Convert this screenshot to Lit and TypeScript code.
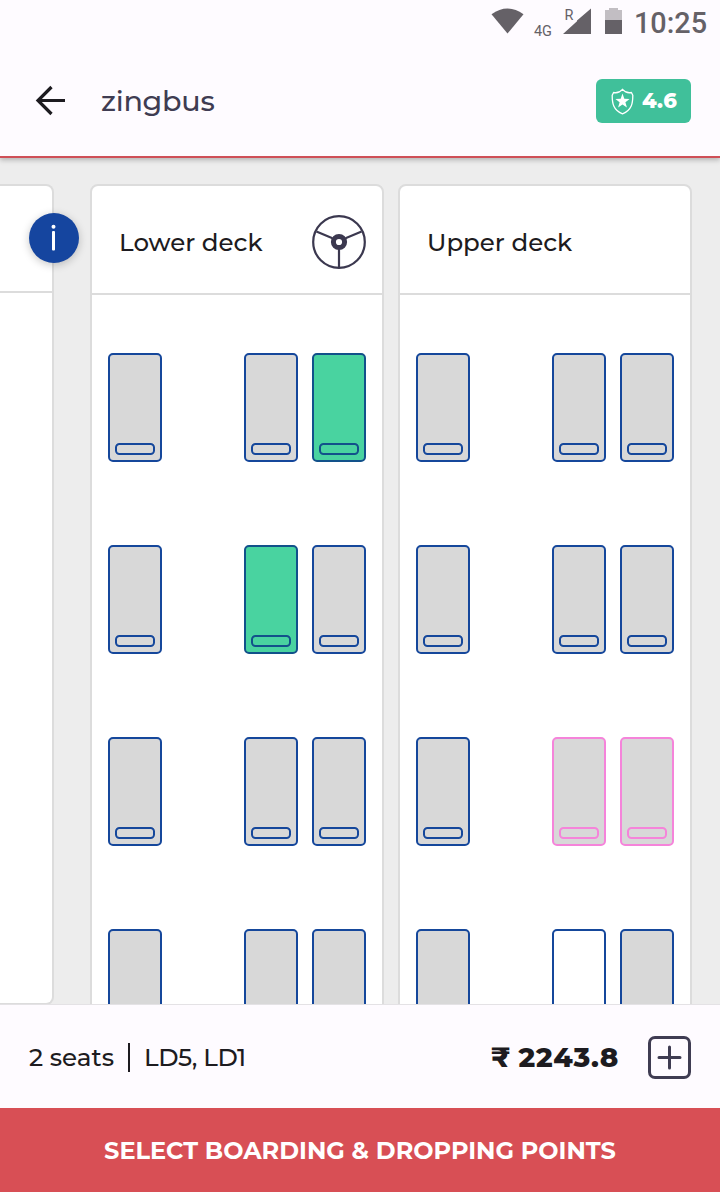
import { LitElement, html, css, svg } from "lit";
import { customElement, property } from "lit/decorators.js";

type SeatState = "booked" | "selected" | "ladies" | "open";

const LOWER: SeatState[][] = [
  ["booked", "booked", "selected"],
  ["booked", "selected", "booked"],
  ["booked", "booked", "booked"],
  ["booked", "booked", "booked"],
];
const UPPER: SeatState[][] = [
  ["booked", "booked", "booked"],
  ["booked", "booked", "booked"],
  ["booked", "ladies", "ladies"],
  ["booked", "open", "booked"],
];

const wheel = svg`
  <g fill="none" stroke="#3b384f" stroke-width="2.2">
    <circle cx="27" cy="27" r="25.8"></circle>
    <path d="M4.4 16.6 L20.5 23.2 M49.6 16.6 L33.5 23.2 M27 33 V52.5"></path>
    <circle cx="27" cy="27" r="5.6" stroke-width="5"></circle>
  </g>`;

@customElement("status-bar")
class StatusBar extends LitElement {
  static styles = css`
    :host {
      display: block; flex: none; height: 44px; position: relative; z-index: 3;
      background: #fefbff; font-family: Roboto, sans-serif;
    }
    .icons { display: block; width: 720px; height: 44px; }
    .net { font-size: 14.5px; }
    .roam { font-size: 14.5px; }
    .time { font-size: 29.5px; font-weight: 500; }
  `;
  render() {
    return html`<svg class="icons" viewBox="0 0 720 44" fill="#656167">
      <path d="M491.5 14.3 Q507.5 2.8 523.5 14.3 L507.5 33.5Z"></path>
      <text class="net" x="534" y="36" textLength="18">4G</text>
      <text class="roam" x="564.5" y="20">R</text>
      <path d="M563 34 L577 21.2 L577 20.5 L591 8.5 V34Z"></path>
      <path fill="#c2bec3" d="M605 20V10H609V8H618V10H622V20Z"></path>
      <path d="M605 20H622V34H605Z"></path>
      <text class="time" x="634" y="33" textLength="73" lengthAdjust="spacingAndGlyphs">10:25</text>
    </svg>`;
  }
}

@customElement("seat-deck")
class SeatDeck extends LitElement {
  @property() label = "";
  @property({ type: Boolean }) driver = false;
  @property({ attribute: false }) rows: SeatState[][] = [];
  static styles = css`
    :host {
      display: block; box-sizing: border-box; flex: none; width: 294px;
      background: #fff; border: 2px solid #dcdcdc; border-radius: 8px;
    }
    .head {
      display: flex; align-items: center; justify-content: space-between;
      height: 107px; padding: 0 16px 0 27px; border-bottom: 2px solid #dcdcdc;
    }
    .name { font-size: 24.5px; font-weight: 500; line-height: 32px; margin-top: 5px; }
    .wheel { width: 54px; height: 54px; margin-top: 5px; }
    .seats {
      display: grid; grid-template-columns: 122px 54px 54px;
      column-gap: 14px; row-gap: 83px; padding: 58px 16px 20px;
    }
    .seat {
      box-sizing: border-box; width: 54px; height: 109px; border: 2px solid #15479b;
      border-radius: 5px; background: #d8d8d8; display: flex; align-items: flex-end;
      justify-content: center; padding-bottom: 5px;
    }
    .pillow {
      box-sizing: border-box; width: 40px; height: 12px;
      border: 2px solid #15479b; border-radius: 4.5px;
    }
    .selected { background: #49d3a0; border-color: #12518a; }
    .selected .pillow { border-color: #12518a; }
    .open { background: #fff; }
    .ladies, .ladies .pillow { border-color: #f584da; }
  `;
  render() {
    return html`
      <div class="head">
        <span class="name">${this.label}</span>
        ${this.driver ? html`<svg class="wheel" viewBox="0 0 54 54">${wheel}</svg>` : ""}
      </div>
      <div class="seats">
        ${this.rows.flat().map((s) => html`<div class="seat ${s}"><div class="pillow"></div></div>`)}
      </div>`;
  }
}

@customElement("app-root")
class AppRoot extends LitElement {
  static styles = css`
    :host {
      display: flex; flex-direction: column; width: 720px; height: 1192px; overflow: hidden;
      font-family: Montserrat, Inter, sans-serif; color: #1d1b20; background: #fefbff;
    }
    .header {
      display: flex; align-items: center; height: 112px; flex: none; box-sizing: content-box;
      border-bottom: 2px solid #cf4f57; padding: 0 29px 0 34px; position: relative; z-index: 2;
      box-shadow: 0 2px 5px rgba(0, 0, 0, 0.25); background: #fefbff;
    }
    .back { width: 34px; height: 32px; }
    .title {
      flex: 1; margin: 2px 0 0 33px; font-size: 28.6px; font-weight: 500; letter-spacing: -0.25px;
      color: #3f3c52; line-height: 36px;
    }
    .rating {
      display: flex; align-items: center; gap: 8px; box-sizing: border-box; width: 95px; height: 44px;
      margin-top: 2px; padding-left: 15px; border-radius: 6px; background: #40c09a; color: #fff;
      font-size: 21px; font-weight: 800; line-height: 28px; font-kerning: none;
    }
    .score { letter-spacing: 0.3px; }
    .shield { width: 23px; height: 27px; flex: none; }
    .main {
      flex: none; height: 846px; box-sizing: border-box; overflow: hidden; position: relative;
      display: flex; align-items: flex-start; background: #ededed; padding-top: 26px;
    }
    .prev {
      flex: none; box-sizing: border-box; width: 54px; height: 821px; margin-right: 36px; background: #fff;
      border: 2px solid #dcdcdc; border-left: 0; border-radius: 0 8px 8px 0;
    }
    .prev-head { height: 105px; border-bottom: 2px solid #dcdcdc; }
    .upper { margin-left: 14px; }
    .info {
      position: absolute; left: 29px; top: 55px; width: 50px; height: 50px; border-radius: 50%;
      background: #15459f; box-shadow: 0 2px 8px rgba(0, 0, 0, 0.22);
    }
    .summary {
      display: flex; align-items: center; flex: none; height: 104px; box-sizing: border-box;
      padding: 2px 29px 0 28px; background: #fefbff; border-top: 1px solid #e4e2e5;
      font-size: 24.6px; font-weight: 500; line-height: 30px;
    }
    .count, .ids, .price { padding-bottom: 2px; }
    .count { box-sizing: border-box; width: 100px; padding-left: 1px; white-space: nowrap; }
    .bar { width: 2px; height: 29px; background: #1d1b20; }
    .ids { flex: 1; margin-left: 14px; letter-spacing: -0.4px; }
    .price {
      font-size: 27.8px; font-weight: 800; letter-spacing: 0.75px; word-spacing: -1.8px;
      margin-right: 29px; white-space: nowrap; font-kerning: none;
    }
    .plus { width: 43px; height: 43px; }
    .cta {
      flex: none; height: 84px; border: 0; padding: 0; background: #d84f55; color: #fff;
      font-family: inherit; font-size: 24px; font-weight: 700; white-space: nowrap;
    }
  `;
  render() {
    return html`
      <status-bar></status-bar>
      <div class="header">
        <svg class="back" viewBox="0 0 34 32" fill="none" stroke="#1d1b20" stroke-width="3.2">
          <path d="M31 16.5H4M17.5 3L4 16.5L17.5 30"></path>
        </svg>
        <span class="title">zingbus</span>
        <div class="rating">
          <svg class="shield" viewBox="0 0 23 27">
            <path fill="none" stroke="#fff" stroke-width="1.3" stroke-linejoin="round"
              d="M11.5 1.3 C9 4.2 5.5 5.2 2.6 4.5 L1.2 7.2 C1.2 15 2 22 11.5 25.8 C21 22 21.8 15 21.8 7.2 L20.4 4.5 C17.5 5.2 14 4.2 11.5 1.3Z"></path>
            <path fill="#fff" d="M11.5 5.6L13.3 10.8L18.6 10.9L14.4 14.2L15.9 19.5L11.5 16.4L7.1 19.5L8.6 14.2L4.4 10.9L9.7 10.8Z"></path>
          </svg>
          <span class="score">4.6</span>
        </div>
      </div>
      <div class="main">
        <div class="prev"><div class="prev-head"></div></div>
        <seat-deck label="Lower deck" driver .rows=${LOWER}></seat-deck>
        <seat-deck class="upper" label="Upper deck" .rows=${UPPER}></seat-deck>
        <svg class="info" viewBox="0 0 50 50" fill="#fff">
          <circle cx="24.5" cy="13.8" r="2"></circle>
          <rect x="23" y="18" width="3" height="19.5" rx="1"></rect>
        </svg>
      </div>
      <div class="summary">
        <span class="count">2 seats</span>
        <span class="bar"></span>
        <span class="ids">LD5, LD1</span>
        <span class="price">₹ 2243.8</span>
        <svg class="plus" viewBox="0 0 43 43" fill="none" stroke="#3f3c52" stroke-width="3">
          <rect x="1.5" y="1.5" width="40" height="40" rx="5.5"></rect>
          <path stroke-linecap="round" d="M11 21.5H32M21.5 11V32"></path>
        </svg>
      </div>
      <button class="cta">SELECT BOARDING &amp; DROPPING POINTS</button>`;
  }
}
